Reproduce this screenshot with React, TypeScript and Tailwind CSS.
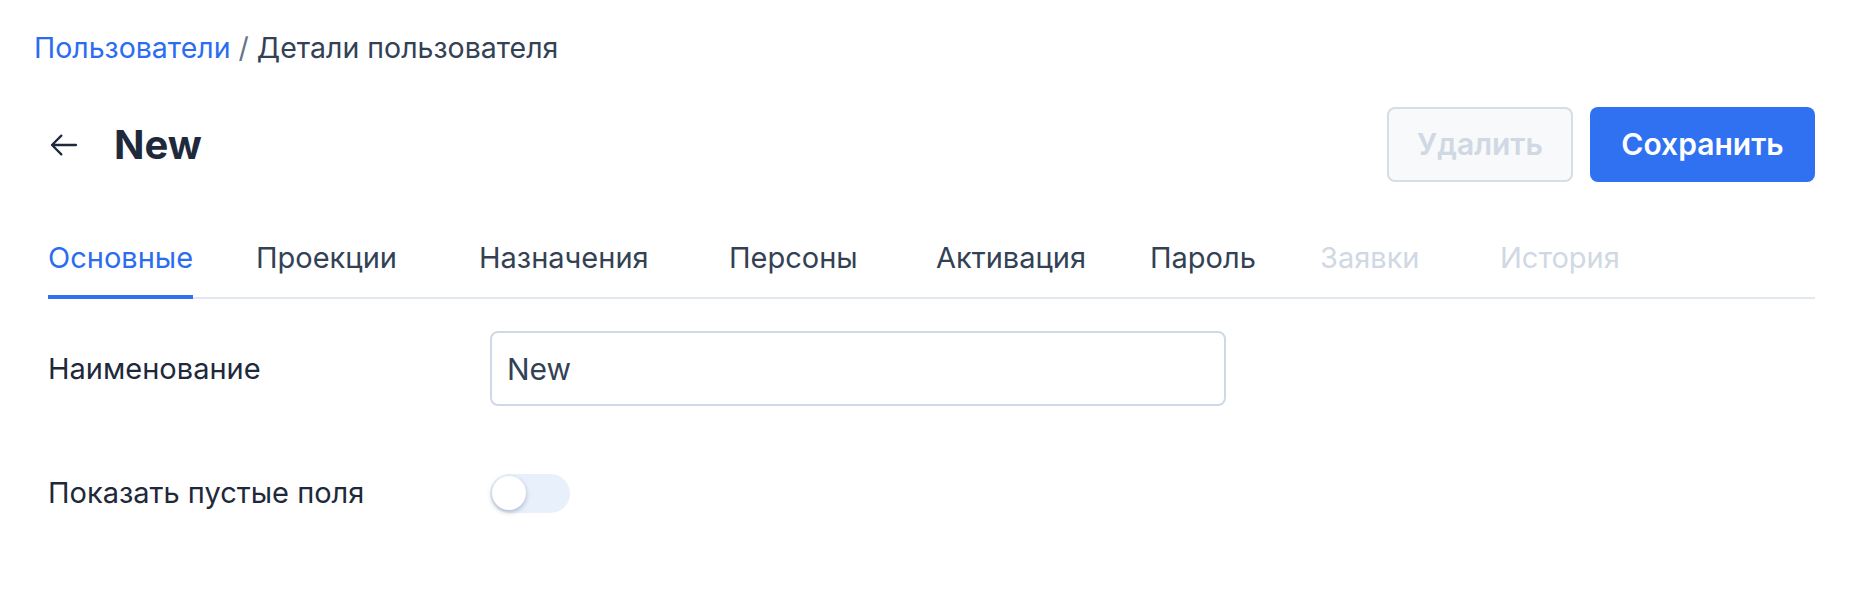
import { useState } from "react";

export default function App() {
  const [name, setName] = useState("New");
  const [showEmpty, setShowEmpty] = useState(false);

  const tabs = [
    { label: "Основные", width: "w-[208px]", active: true },
    { label: "Проекции", width: "w-[223px]" },
    { label: "Назначения", width: "w-[250px]" },
    { label: "Персоны", width: "w-[207px]" },
    { label: "Активация", width: "w-[214px]" },
    { label: "Пароль", width: "w-[170px]" },
    { label: "Заявки", width: "w-[180px]", disabled: true },
    { label: "История", width: "w-[180px]", disabled: true },
  ];

  return (
    <div className="min-h-screen bg-white font-['Inter','Liberation_Sans',sans-serif] text-[#334155]">
      {/* Breadcrumbs */}
      <nav className="pl-[34px] pt-[28px] text-[28.5px] leading-[40px]">
        <a href="#" className="text-[#2b6cf0]">
          Пользователи
        </a>
        <span className="text-[#64748b]"> / </span>
        <span className="text-[#334155]">Детали пользователя</span>
      </nav>

      <div className="pl-[48px] pr-[41px]">
        {/* Header */}
        <div className="mt-[39px] flex items-center justify-between">
          <div className="flex items-center">
            <button className="flex h-[32px] w-[32px] items-center justify-center text-[#1e293b]">
              <svg
                className="h-[32px] w-[32px]"
                viewBox="0 0 24 24"
                fill="none"
                stroke="currentColor"
                strokeWidth={1.7}
                strokeLinecap="round"
                strokeLinejoin="round"
              >
                <path d="M21 12H3M10 5l-7 7 7 7" />
              </svg>
            </button>
            <h1 className="ml-[34px] text-[40px] font-bold leading-[48px] text-[#1e293b]">
              New
            </h1>
          </div>
          <div className="flex gap-[17px]">
            <button
              disabled
              className="h-[75px] w-[186px] rounded-[8px] border-2 border-[#d5dde8] bg-[#f8f9fb] text-[30px] font-semibold text-[#cfd8e3]"
            >
              Удалить
            </button>
            <button className="h-[75px] w-[225px] rounded-[8px] bg-[#2f71f0] text-[30px] font-semibold text-white">
              Сохранить
            </button>
          </div>
        </div>

        {/* Tabs */}
        <div className="mt-[56px] flex border-b-2 border-[#e2e8f0]">
          {tabs.map((tab) => (
            <div key={tab.label} className={tab.width}>
              <span
                className={`-mb-[2px] inline-block border-b-4 pb-[17px] text-[29px] leading-[40px] ${
                  tab.active
                    ? "border-[#2f71f0] text-[#2b6cf0]"
                    : tab.disabled
                    ? "border-transparent text-[#cfd8e3]"
                    : "border-transparent text-[#334155]"
                }`}
              >
                {tab.label}
              </span>
            </div>
          ))}
        </div>

        {/* Form */}
        <div className="mt-[32px] flex items-center">
          <label className="w-[442px] text-[29px] leading-[40px] text-[#1e293b]">
            Наименование
          </label>
          <input
            value={name}
            onChange={(e) => setName(e.target.value)}
            className="h-[75px] w-[736px] rounded-[8px] border-2 border-[#cfd9e6] px-[15px] text-[30px] text-[#334155] outline-none"
          />
        </div>

        <div className="mt-[67px] flex items-center">
          <label className="w-[442px] text-[29px] leading-[40px] text-[#1e293b]">
            Показать пустые поля
          </label>
          <button
            onClick={() => setShowEmpty(!showEmpty)}
            className={`flex h-[39px] w-[80px] items-center rounded-full px-[2px] ${
              showEmpty ? "justify-end bg-[#2f71f0]" : "justify-start bg-[#e8f0fc]"
            }`}
          >
            <span className="h-[34px] w-[34px] rounded-full bg-white shadow-[0_2px_5px_rgba(100,116,139,0.45)]" />
          </button>
        </div>
      </div>
    </div>
  );
}
